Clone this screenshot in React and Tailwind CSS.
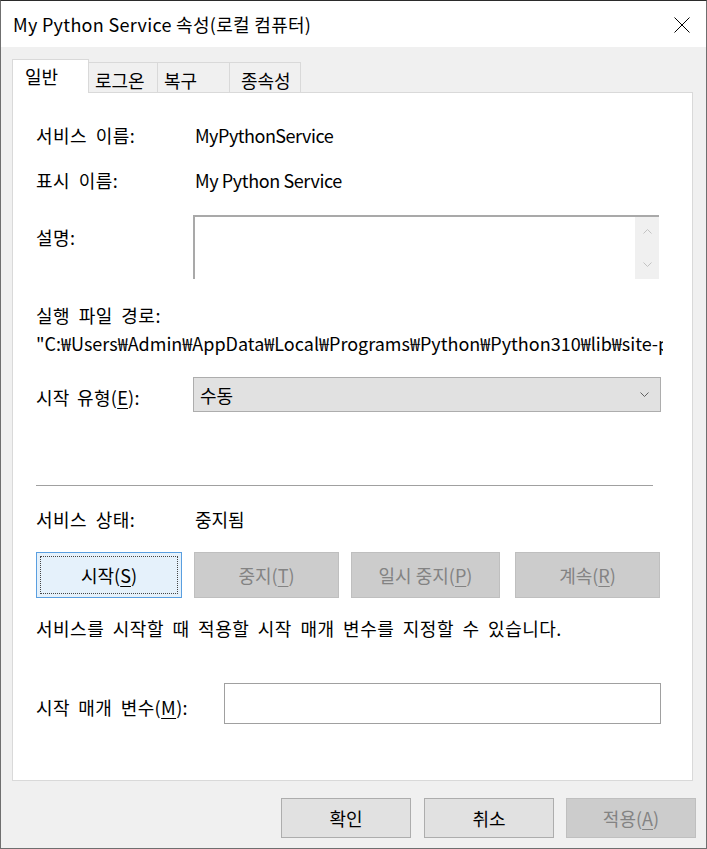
function U({ children }) {
  return <span className="underline underline-offset-[3px] decoration-1">{children}</span>;
}

function Chevron({ up = false, color = "#606060" }) {
  return (
    <svg width="9" height="5" viewBox="0 0 9 5" className="block">
      <path d={up ? "M0.5 4.5 L4.5 0.5 L8.5 4.5" : "M0.5 0.5 L4.5 4.5 L8.5 0.5"} stroke={color} strokeWidth="1" fill="none" />
    </svg>
  );
}

export default function App() {
  return (
    <div className="w-[707px] h-[849px] flex flex-col border border-[#6f6f6f] border-t-[#2b2b2b] font-['Noto_Sans_CJK_KR','Noto_Sans',sans-serif] text-[18px] leading-[24px] text-black overflow-hidden bg-[#f0f0f0]">
      {/* Title bar */}
      <div className="h-[46px] shrink-0 bg-white flex items-center justify-between pl-[12px] pr-[16px]">
        <span className="text-[18px] tracking-[0.3px]">My Python Service 속성(로컬 컴퓨터)</span>
        <svg width="16" height="16" viewBox="0 0 16 16" className="block mt-[1px]">
          <path d="M0.5 0.5 L15.5 15.5 M15.5 0.5 L0.5 15.5" stroke="#000" strokeWidth="1" />
        </svg>
      </div>

      {/* Body */}
      <div className="flex-1 flex flex-col pt-[12px] pl-[11px] pr-[10px] pb-[10px]">
        {/* Tabs */}
        <div className="h-[33px] flex items-end shrink-0">
          <div className="relative z-10 -mb-px h-[34px] w-[77px] bg-white border border-b-0 border-[#d9d9d9] pl-[12px] pt-[4px]">
            일반
          </div>
          <div className="h-[30px] w-[69px] border-t border-r border-[#d9d9d9] pl-[6px] pt-[5px]">로그온</div>
          <div className="h-[30px] w-[72px] border-t border-r border-[#d9d9d9] pl-[6px] pt-[5px]">복구</div>
          <div className="h-[30px] w-[71px] border-t border-r border-[#d9d9d9] pl-[11px] pt-[5px]">종속성</div>
        </div>

        {/* Panel */}
        <div className="flex-1 min-h-0 mr-[3px] bg-white border border-[#d9d9d9] pl-[23px] pt-[30px] flex flex-col">
          <div className="h-[24px] flex items-center">
            <span className="w-[159px] shrink-0 tracking-[0.5px] [word-spacing:4px]">서비스 이름:</span>
            <span className="tracking-[-0.5px]">MyPythonService</span>
          </div>
          <div className="h-[24px] mt-[21px] flex items-center">
            <span className="w-[159px] shrink-0 tracking-[0.5px] [word-spacing:4px]">표시 이름:</span>
            <span className="tracking-[-0.4px]">My Python Service</span>
          </div>
          <div className="mt-[23px] flex items-start">
            <span className="w-[157px] shrink-0 pt-[10px] tracking-[0.5px]">설명:</span>
            <div className="w-[466px] h-[64px] flex border-t-2 border-l-2 border-t-[#a9a9a9] border-l-[#a9a9a9] bg-white">
              <div className="flex-1" />
              <div className="w-[24px] bg-[#f0f0f0] flex flex-col items-center justify-between pt-[12px] pb-[12px]">
                <Chevron up color="#c3c3c3" />
                <Chevron color="#c3c3c3" />
              </div>
            </div>
          </div>
          <div className="h-[24px] mt-[24px] flex items-center tracking-[0.5px] [word-spacing:4px]">실행 파일 경로:</div>
          <div className="h-[24px] mt-[4px] w-[627px] overflow-hidden whitespace-nowrap">
            "C:₩Users₩Admin₩AppData₩Local₩Programs₩Python₩Python310₩lib₩site-packages₩win32₩pythonservice.exe"
          </div>
          <div className="mt-[22px] flex items-center">
            <span className="w-[157px] shrink-0 pt-[4px] tracking-[0.3px] [word-spacing:3px]">시작 유형(<U>E</U>):</span>
            <div className="w-[468px] h-[35px] bg-[#e1e1e1] border border-[#adadad] flex items-center justify-between pl-[6px] pr-[11px]">
              <span>수동</span>
              <Chevron />
            </div>
          </div>
          <div className="mt-[73px] w-[617px] h-px bg-[#a0a0a0] shrink-0" />
          <div className="h-[24px] mt-[21px] flex items-center">
            <span className="w-[159px] shrink-0 tracking-[0.5px] [word-spacing:4px]">서비스 상태:</span>
            <span>중지됨</span>
          </div>
          <div className="mt-[21px] flex h-[46px]">
            <div className="w-[146px] h-[46px] bg-[#e5f1fb] border border-[#5a9fe0] p-[3px]">
              <div className="w-full h-full border border-dotted border-[#444] flex items-center justify-center">
                <span>시작(<U>S</U>)</span>
              </div>
            </div>
            <div className="ml-[12px] w-[145px] h-[46px] bg-[#cccccc] border border-[#bfbfbf] flex items-center justify-center text-[#838383]">
              중지(<U>T</U>)
            </div>
            <div className="ml-[12px] w-[149px] h-[46px] bg-[#cccccc] border border-[#bfbfbf] flex items-center justify-center text-[#838383]">
              일시 중지(<U>P</U>)
            </div>
            <div className="ml-[15px] w-[145px] h-[46px] bg-[#cccccc] border border-[#bfbfbf] flex items-center justify-center text-[#838383]">
              계속(<U>R</U>)
            </div>
          </div>
          <div className="h-[24px] mt-[18px] flex items-center whitespace-nowrap tracking-[0.5px] [word-spacing:4px]">
            서비스를 시작할 때 적용할 시작 매개 변수를 지정할 수 있습니다.
          </div>
          <div className="mt-[43px] flex items-center">
            <span className="w-[188px] shrink-0 pt-[6px] tracking-[0.4px] [word-spacing:4px]">시작 매개 변수(<U>M</U>):</span>
            <div className="w-[437px] h-[41px] bg-white border border-[#a0a0a0]" />
          </div>
        </div>

        {/* Dialog buttons */}
        <div className="mt-[17px] h-[40px] flex justify-end shrink-0">
          <div className="w-[130px] h-[40px] bg-[#e1e1e1] border border-[#adadad] flex items-center justify-center">확인</div>
          <div className="ml-[13px] w-[130px] h-[40px] bg-[#e1e1e1] border border-[#adadad] flex items-center justify-center">취소</div>
          <div className="ml-[12px] w-[130px] h-[40px] bg-[#cccccc] border border-[#bfbfbf] flex items-center justify-center text-[#838383]">
            적용(<U>A</U>)
          </div>
        </div>
      </div>
    </div>
  );
}
